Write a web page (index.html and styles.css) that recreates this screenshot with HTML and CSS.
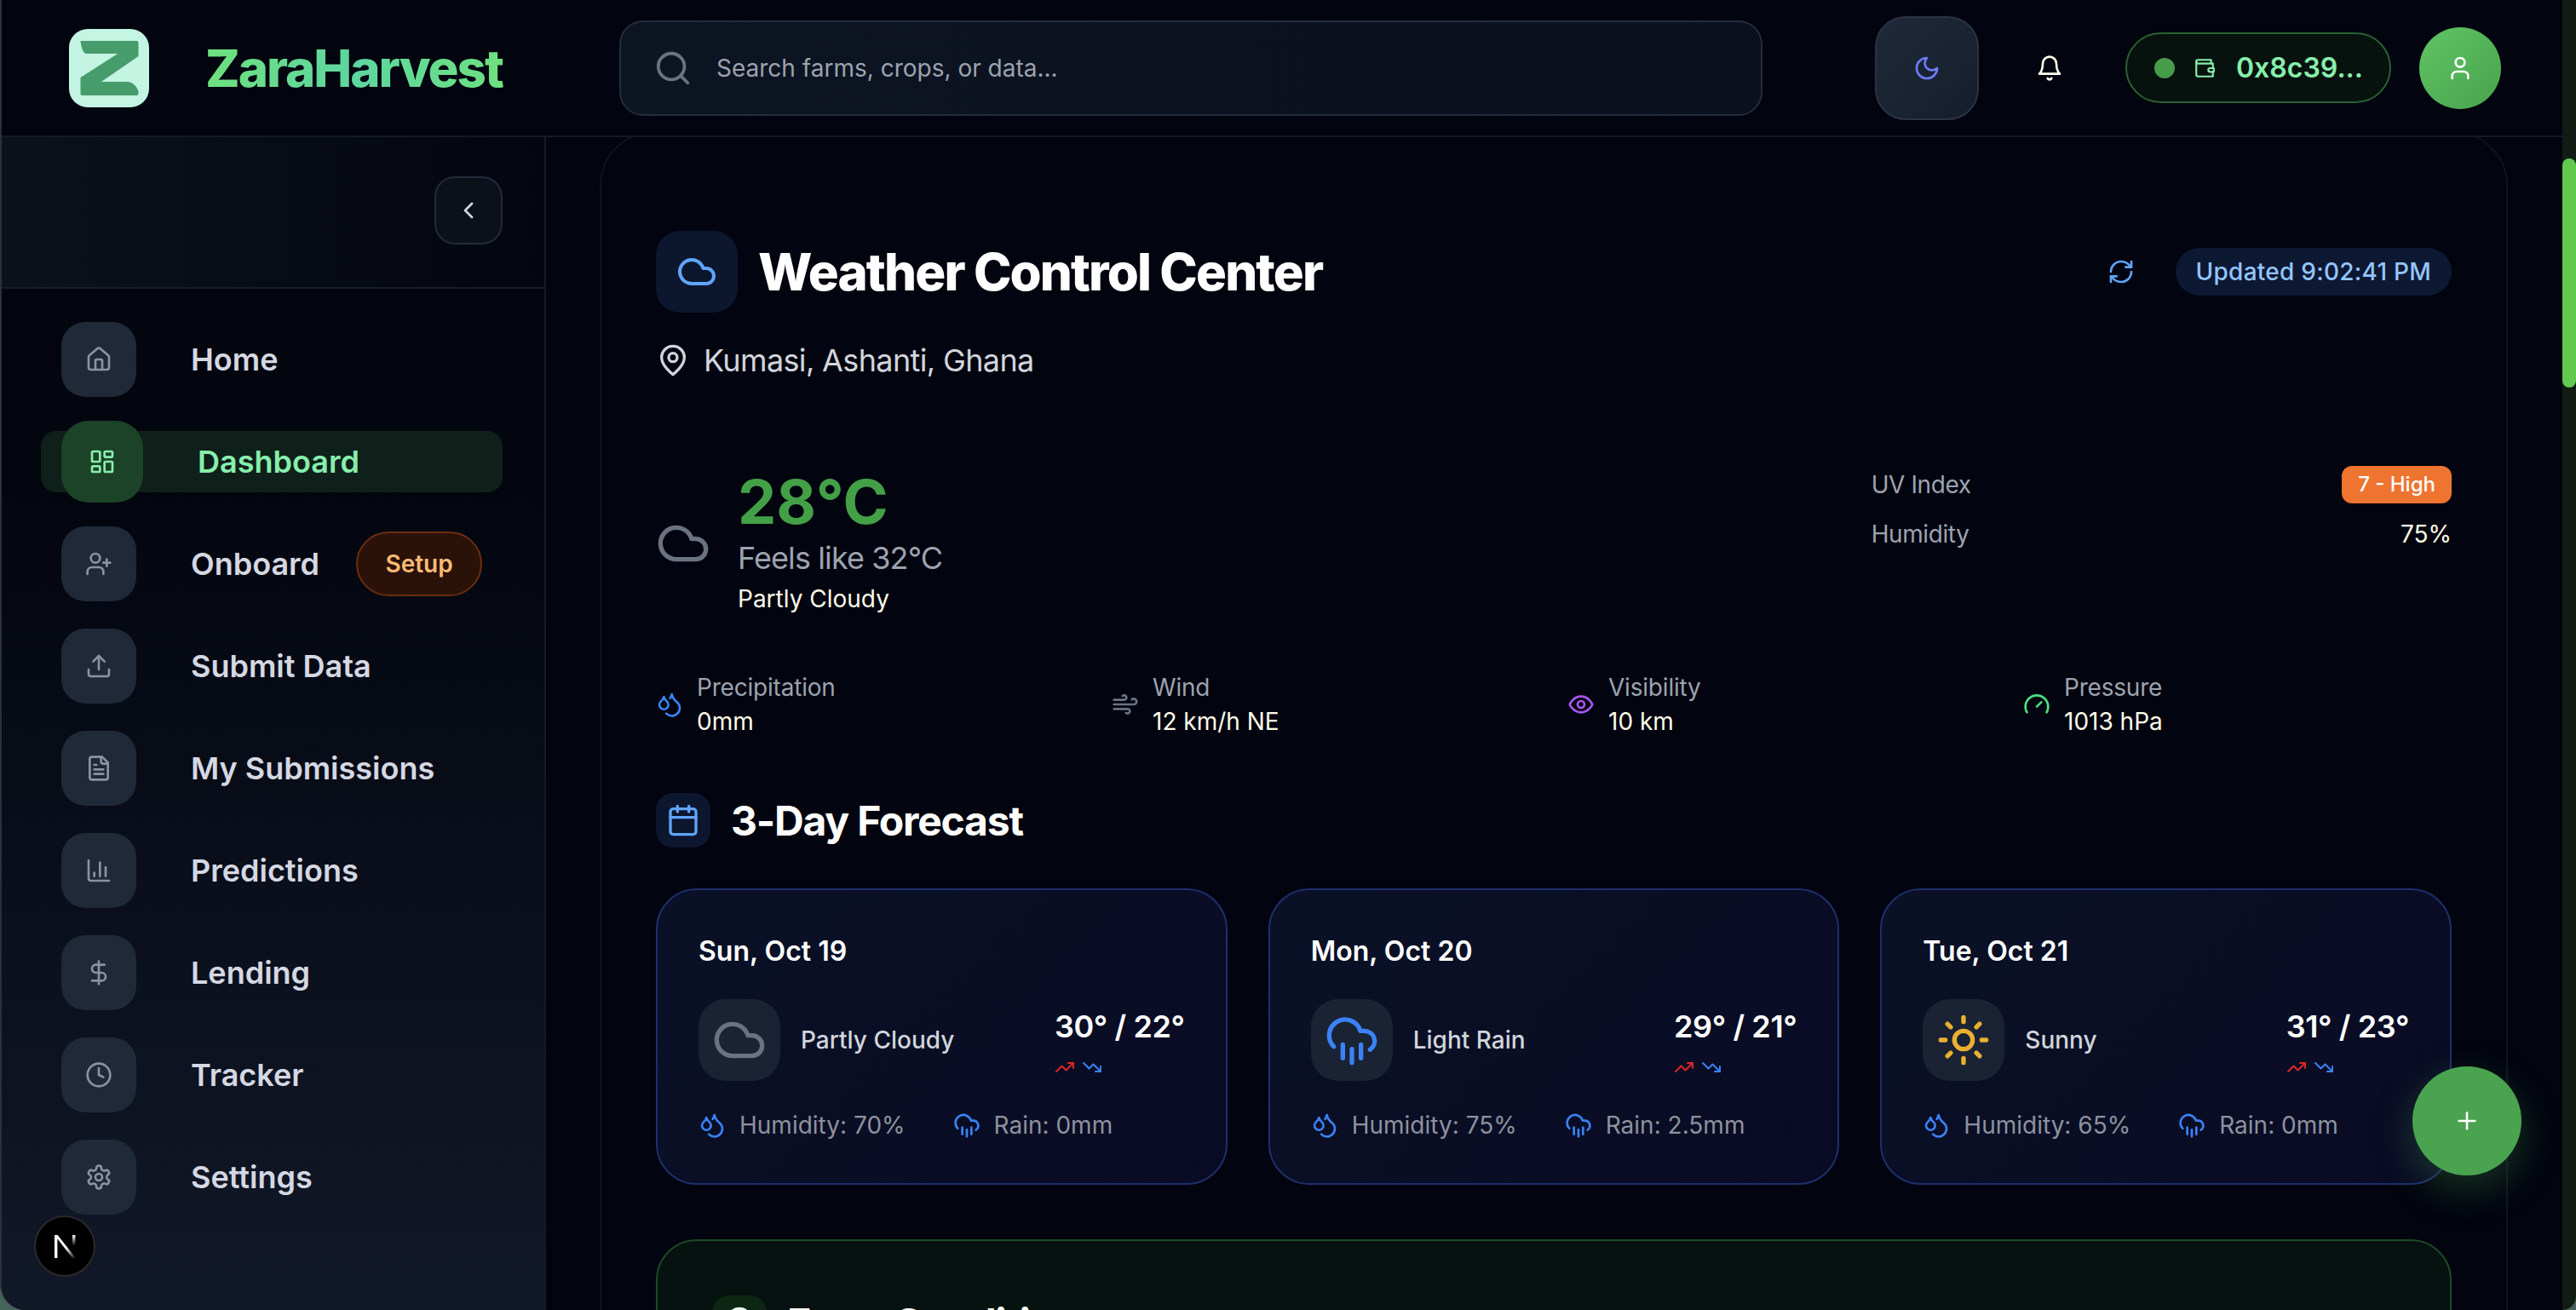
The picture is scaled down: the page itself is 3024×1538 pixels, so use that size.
FILE: index.html
```html
<!DOCTYPE html>
<html lang="en">
<head>
    <meta charset="UTF-8">
    <meta name="viewport" content="width=device-width, initial-scale=1.0">
    <title>ZaraHarvest</title>
    <link rel="stylesheet" href="styles.css">
</head>
<body>
    <svg class="sprite" xmlns="http://www.w3.org/2000/svg">
        <symbol id="i-cloud" viewBox="0 0 24 24"><path d="M17.5 19H9a7 7 0 1 1 6.71-9h1.79a4.5 4.5 0 1 1 0 9Z"/></symbol>
        <symbol id="i-rain" viewBox="0 0 24 24"><path d="M4 14.899A7 7 0 1 1 15.71 8h1.79a4.5 4.5 0 0 1 2.5 8.242"/><path d="M16 14v6"/><path d="M8 14v6"/><path d="M12 16v6"/></symbol>
        <symbol id="i-sun" viewBox="0 0 24 24"><circle cx="12" cy="12" r="4"/><path d="M12 2v2"/><path d="M12 20v2"/><path d="m4.93 4.93 1.41 1.41"/><path d="m17.66 17.66 1.41 1.41"/><path d="M2 12h2"/><path d="M20 12h2"/><path d="m6.34 17.66-1.41 1.41"/><path d="m19.07 4.93-1.41 1.41"/></symbol>
        <symbol id="i-drops" viewBox="0 0 24 24"><path d="M7 16.3c2.2 0 4-1.83 4-4.05 0-1.16-.57-2.26-1.71-3.19S7.29 6.75 7 5.3c-.29 1.45-1.14 2.84-2.29 3.76S3 11.1 3 12.25c0 2.22 1.8 4.05 4 4.05z"/><path d="M12.56 6.6A10.97 10.97 0 0 0 14 3.02c.5 2.5 2 4.9 4 6.5s3 3.5 3 5.5a6.98 6.98 0 0 1-11.91 4.97"/></symbol>
        <symbol id="i-up" viewBox="0 0 24 24"><polyline points="22 7 13.5 15.5 8.5 10.5 2 17"/><polyline points="16 7 22 7 22 13"/></symbol>
        <symbol id="i-down" viewBox="0 0 24 24"><polyline points="22 17 13.5 8.5 8.5 13.5 2 7"/><polyline points="16 17 22 17 22 11"/></symbol>
    </svg>

    <div class="window">
        <header class="topbar">
            <div class="logo">
                <svg viewBox="0 0 93 92"><path d="M13 14H79a2 2 0 0 1 2 2V32L37.5 62H68C74 62 78 66 81 73V76a2 2 0 0 1-2 2H15a2 2 0 0 1-2-2V57L56.7 29H20C16 29 14 22 13 14Z"/></svg>
            </div>
            <div class="brand">ZaraHarvest</div>
            <div class="search">
                <svg class="ic search-ic" viewBox="0 0 24 24"><circle cx="11" cy="11" r="8"/><path d="m21 21-4.3-4.3"/></svg>
                <input type="text" placeholder="Search farms, crops, or data...">
            </div>
            <button class="theme-btn">
                <svg class="ic" viewBox="0 0 24 24"><path d="M12 3a6 6 0 0 0 9 9 9 9 0 1 1-9-9Z"/></svg>
            </button>
            <button class="bell-btn">
                <svg class="ic" viewBox="0 0 24 24"><path d="M6 8a6 6 0 0 1 12 0c0 7 3 9 3 9H3s3-2 3-9"/><path d="M10.3 21a1.94 1.94 0 0 0 3.4 0"/></svg>
            </button>
            <div class="wallet">
                <span class="wallet-dot"></span>
                <svg class="ic" viewBox="0 0 24 24"><path d="M21 12V7H5a2 2 0 0 1 0-4h14v4"/><path d="M3 5v14a2 2 0 0 0 2 2h16v-5"/><path d="M18 12a2 2 0 0 0 0 4h4v-4Z"/></svg>
                <span>0x8c39...</span>
            </div>
            <button class="avatar">
                <svg class="ic" viewBox="0 0 24 24"><path d="M19 21v-2a4 4 0 0 0-4-4H9a4 4 0 0 0-4 4v2"/><circle cx="12" cy="7" r="4"/></svg>
            </button>
        </header>

        <div class="body-row">
            <aside class="sidebar">
                <div class="sidebar-head">
                    <button class="collapse-btn">
                        <svg class="ic" viewBox="0 0 24 24"><path d="m15 18-6-6 6-6"/></svg>
                    </button>
                </div>
                <nav class="nav">
                    <a class="nav-item">
                        <span class="nav-icon"><svg class="ic" viewBox="0 0 24 24"><path d="M15 21v-8a1 1 0 0 0-1-1h-4a1 1 0 0 0-1 1v8"/><path d="M3 10a2 2 0 0 1 .709-1.528l7-5.999a2 2 0 0 1 2.582 0l7 5.999A2 2 0 0 1 21 10v9a2 2 0 0 1-2 2H5a2 2 0 0 1-2-2z"/></svg></span>
                        Home
                    </a>
                    <a class="nav-item active">
                        <span class="nav-icon"><svg class="ic" viewBox="0 0 24 24"><rect x="3" y="3" width="7" height="9" rx="1"/><rect x="14" y="3" width="7" height="5" rx="1"/><rect x="14" y="12" width="7" height="9" rx="1"/><rect x="3" y="16" width="7" height="5" rx="1"/></svg></span>
                        Dashboard
                    </a>
                    <a class="nav-item">
                        <span class="nav-icon"><svg class="ic" viewBox="0 0 24 24"><path d="M16 21v-2a4 4 0 0 0-4-4H6a4 4 0 0 0-4 4v2"/><circle cx="9" cy="7" r="4"/><path d="M19 8v6"/><path d="M22 11h-6"/></svg></span>
                        Onboard
                        <span class="setup">Setup</span>
                    </a>
                    <a class="nav-item">
                        <span class="nav-icon"><svg class="ic" viewBox="0 0 24 24"><path d="M21 15v4a2 2 0 0 1-2 2H5a2 2 0 0 1-2-2v-4"/><polyline points="17 8 12 3 7 8"/><path d="M12 3v12"/></svg></span>
                        Submit Data
                    </a>
                    <a class="nav-item">
                        <span class="nav-icon"><svg class="ic" viewBox="0 0 24 24"><path d="M15 2H6a2 2 0 0 0-2 2v16a2 2 0 0 0 2 2h12a2 2 0 0 0 2-2V7Z"/><path d="M14 2v4a2 2 0 0 0 2 2h4"/><path d="M10 9H8"/><path d="M16 13H8"/><path d="M16 17H8"/></svg></span>
                        My Submissions
                    </a>
                    <a class="nav-item">
                        <span class="nav-icon"><svg class="ic" viewBox="0 0 24 24"><path d="M3 3v16a2 2 0 0 0 2 2h16"/><path d="M18 17V9"/><path d="M13 17V5"/><path d="M8 17v-3"/></svg></span>
                        Predictions
                    </a>
                    <a class="nav-item">
                        <span class="nav-icon"><svg class="ic" viewBox="0 0 24 24"><path d="M12 2v20"/><path d="M17 5H9.5a3.5 3.5 0 0 0 0 7h5a3.5 3.5 0 0 1 0 7H6"/></svg></span>
                        Lending
                    </a>
                    <a class="nav-item">
                        <span class="nav-icon"><svg class="ic" viewBox="0 0 24 24"><circle cx="12" cy="12" r="10"/><polyline points="12 6 12 12 16 14"/></svg></span>
                        Tracker
                    </a>
                    <a class="nav-item">
                        <span class="nav-icon"><svg class="ic" viewBox="0 0 24 24"><path d="M12.22 2h-.44a2 2 0 0 0-2 2v.18a2 2 0 0 1-1 1.73l-.43.25a2 2 0 0 1-2 0l-.15-.08a2 2 0 0 0-2.73.73l-.22.38a2 2 0 0 0 .73 2.73l.15.1a2 2 0 0 1 1 1.72v.51a2 2 0 0 1-1 1.74l-.15.09a2 2 0 0 0-.73 2.73l.22.38a2 2 0 0 0 2.73.73l.15-.08a2 2 0 0 1 2 0l.43.25a2 2 0 0 1 1 1.73V20a2 2 0 0 0 2 2h.44a2 2 0 0 0 2-2v-.18a2 2 0 0 1 1-1.73l.43-.25a2 2 0 0 1 2 0l.15.08a2 2 0 0 0 2.73-.73l.22-.39a2 2 0 0 0-.73-2.73l-.15-.08a2 2 0 0 1-1-1.74v-.5a2 2 0 0 1 1-1.74l.15-.09a2 2 0 0 0 .73-2.73l-.22-.38a2 2 0 0 0-2.73-.73l-.15.08a2 2 0 0 1-2 0l-.43-.25a2 2 0 0 1-1-1.73V4a2 2 0 0 0-2-2z"/><circle cx="12" cy="12" r="3"/></svg></span>
                        Settings
                    </a>
                </nav>
            </aside>

            <main class="main">
                <section class="weather-card">
                    <div class="title-row">
                        <span class="title-icon"><svg class="ic" viewBox="0 0 24 24"><use href="#i-cloud"/></svg></span>
                        <h1>Weather Control Center</h1>
                        <svg class="ic refresh" viewBox="0 0 24 24"><path d="M3 12a9 9 0 0 1 9-9 9.75 9.75 0 0 1 6.74 2.74L21 8"/><path d="M21 3v5h-5"/><path d="M21 12a9 9 0 0 1-9 9 9.75 9.75 0 0 1-6.74-2.74L3 16"/><path d="M8 16H3v5"/></svg>
                        <span class="updated">Updated 9:02:41 PM</span>
                    </div>
                    <div class="location">
                        <svg class="ic" viewBox="0 0 24 24"><path d="M20 10c0 6-8 12-8 12s-8-6-8-12a8 8 0 0 1 16 0Z"/><circle cx="12" cy="10" r="3"/></svg>
                        Kumasi, Ashanti, Ghana
                    </div>

                    <div class="current">
                        <div class="current-main">
                            <svg class="ic current-ic" viewBox="0 0 24 24"><use href="#i-cloud"/></svg>
                            <div>
                                <div class="temp">28°C</div>
                                <div class="feels">Feels like 32°C</div>
                                <div class="cond">Partly Cloudy</div>
                            </div>
                        </div>
                        <div class="current-side">
                            <div class="side-row"><span>UV Index</span><span class="uv">7 - High</span></div>
                            <div class="side-row"><span>Humidity</span><span class="side-val">75%</span></div>
                        </div>
                    </div>

                    <div class="metrics">
                        <div class="metric">
                            <svg class="ic m-blue" viewBox="0 0 24 24"><use href="#i-drops"/></svg>
                            <div><div class="m-label">Precipitation</div><div class="m-val">0mm</div></div>
                        </div>
                        <div class="metric">
                            <svg class="ic m-gray" viewBox="0 0 24 24"><path d="M17.7 7.7a2.5 2.5 0 1 1 1.8 4.3H2"/><path d="M9.6 4.6A2 2 0 1 1 11 8H2"/><path d="M12.6 19.4A2 2 0 1 0 14 16H2"/></svg>
                            <div><div class="m-label">Wind</div><div class="m-val">12 km/h NE</div></div>
                        </div>
                        <div class="metric">
                            <svg class="ic m-purple" viewBox="0 0 24 24"><path d="M2 12s3-7 10-7 10 7 10 7-3 7-10 7-10-7-10-7Z"/><circle cx="12" cy="12" r="3"/></svg>
                            <div><div class="m-label">Visibility</div><div class="m-val">10 km</div></div>
                        </div>
                        <div class="metric">
                            <svg class="ic m-green" viewBox="0 0 24 24"><path d="m12 14 4-4"/><path d="M3.34 19a10 10 0 1 1 17.32 0"/></svg>
                            <div><div class="m-label">Pressure</div><div class="m-val">1013 hPa</div></div>
                        </div>
                    </div>

                    <div class="section-head">
                        <span class="section-icon"><svg class="ic" viewBox="0 0 24 24"><path d="M8 2v4"/><path d="M16 2v4"/><rect x="3" y="4" width="18" height="18" rx="2"/><path d="M3 10h18"/></svg></span>
                        <h2>3-Day Forecast</h2>
                    </div>

                    <div class="forecast">
                        <div class="day">
                            <div class="day-date">Sun, Oct 19</div>
                            <div class="day-mid">
                                <span class="day-icon"><svg class="ic gray" viewBox="0 0 24 24"><use href="#i-cloud"/></svg></span>
                                <span class="day-cond">Partly Cloudy</span>
                                <div class="day-temps">
                                    <div class="day-temp">30° / 22°</div>
                                    <div class="trends">
                                        <svg class="ic t-up" viewBox="0 0 24 24"><use href="#i-up"/></svg>
                                        <svg class="ic t-down" viewBox="0 0 24 24"><use href="#i-down"/></svg>
                                    </div>
                                </div>
                            </div>
                            <div class="day-foot">
                                <span class="foot-item"><svg class="ic" viewBox="0 0 24 24"><use href="#i-drops"/></svg>Humidity: 70%</span>
                                <span class="foot-item"><svg class="ic" viewBox="0 0 24 24"><use href="#i-rain"/></svg>Rain: 0mm</span>
                            </div>
                        </div>
                        <div class="day">
                            <div class="day-date">Mon, Oct 20</div>
                            <div class="day-mid">
                                <span class="day-icon"><svg class="ic blue" viewBox="0 0 24 24"><use href="#i-rain"/></svg></span>
                                <span class="day-cond">Light Rain</span>
                                <div class="day-temps">
                                    <div class="day-temp">29° / 21°</div>
                                    <div class="trends">
                                        <svg class="ic t-up" viewBox="0 0 24 24"><use href="#i-up"/></svg>
                                        <svg class="ic t-down" viewBox="0 0 24 24"><use href="#i-down"/></svg>
                                    </div>
                                </div>
                            </div>
                            <div class="day-foot">
                                <span class="foot-item"><svg class="ic" viewBox="0 0 24 24"><use href="#i-drops"/></svg>Humidity: 75%</span>
                                <span class="foot-item"><svg class="ic" viewBox="0 0 24 24"><use href="#i-rain"/></svg>Rain: 2.5mm</span>
                            </div>
                        </div>
                        <div class="day">
                            <div class="day-date">Tue, Oct 21</div>
                            <div class="day-mid">
                                <span class="day-icon"><svg class="ic yellow" viewBox="0 0 24 24"><use href="#i-sun"/></svg></span>
                                <span class="day-cond">Sunny</span>
                                <div class="day-temps">
                                    <div class="day-temp">31° / 23°</div>
                                    <div class="trends">
                                        <svg class="ic t-up" viewBox="0 0 24 24"><use href="#i-up"/></svg>
                                        <svg class="ic t-down" viewBox="0 0 24 24"><use href="#i-down"/></svg>
                                    </div>
                                </div>
                            </div>
                            <div class="day-foot">
                                <span class="foot-item"><svg class="ic" viewBox="0 0 24 24"><use href="#i-drops"/></svg>Humidity: 65%</span>
                                <span class="foot-item"><svg class="ic" viewBox="0 0 24 24"><use href="#i-rain"/></svg>Rain: 0mm</span>
                            </div>
                        </div>
                    </div>

                    <div class="farm-card">
                        <div class="section-head">
                            <span class="section-icon green"><svg class="ic" viewBox="0 0 24 24"><path d="M20 10c0 6-8 12-8 12s-8-6-8-12a8 8 0 0 1 16 0Z"/><circle cx="12" cy="10" r="3"/></svg></span>
                            <h2>Farm Conditions</h2>
                        </div>
                    </div>
                </section>
            </main>
        </div>
    </div>

    <div class="scroll-track"><div class="scroll-thumb"></div></div>

    <button class="fab">
        <svg class="ic" viewBox="0 0 24 24"><path d="M5 12h14"/><path d="M12 5v14"/></svg>
    </button>

    <div class="next-badge">
        <svg viewBox="0 0 25 27">
            <defs>
                <linearGradient id="n-diag" x1="0" y1="0" x2="1" y2="1"><stop offset="0.55" stop-color="#fff"/><stop offset="1" stop-color="#fff" stop-opacity="0"/></linearGradient>
                <linearGradient id="n-stem" x1="0" y1="0" x2="0" y2="1"><stop offset="0" stop-color="#fff"/><stop offset="0.7" stop-color="#fff" stop-opacity="0"/></linearGradient>
            </defs>
            <rect x="0" y="0" width="3.4" height="27" fill="#fff"/>
            <polygon points="0,0 3.6,0 25,27 21,27" fill="url(#n-diag)"/>
            <rect x="21" y="0" width="3.4" height="18" fill="url(#n-stem)"/>
        </svg>
    </div>
</body>
</html>
```

FILE: styles.css
```css
* {
    box-sizing: border-box;
}
html, body {
    height: 100%;
}
body {
    margin: 0;
    display: flex;
    overflow: hidden;
    background-color: #45655a;
    font-family: Inter, "Liberation Sans", sans-serif;
    color: #fff;
}
h1, h2 {
    margin: 0;
    color: #fff;
}
button {
    border: none;
    padding: 0;
    background: none;
    display: flex;
    align-items: center;
    justify-content: center;
}
.sprite {
    display: none;
}
.ic {
    width: 32px;
    height: 32px;
    flex-shrink: 0;
    fill: none;
    stroke: currentColor;
    stroke-width: 2;
    stroke-linecap: round;
    stroke-linejoin: round;
}

.window {
    flex: 1;
    min-width: 0;
    height: 100%;
    display: flex;
    flex-direction: column;
    background-color: #02040f;
    border-left: 2px solid #2b303b;
    border-bottom-left-radius: 30px;
    overflow: hidden;
}

/* top bar */
.topbar {
    position: relative;
    z-index: 2;
    height: 161px;
    flex-shrink: 0;
    display: flex;
    align-items: center;
    padding: 0 72px 0 79px;
    background-color: #02040f;
    border-bottom: 2px solid #141a26;
}
.logo {
    width: 94px;
    height: 92px;
    flex-shrink: 0;
    border-radius: 22px;
    background-color: #c4f5e3;
}
.logo svg {
    display: block;
    width: 100%;
    height: 100%;
    fill: #479c6c;
}
.brand {
    width: 350px;
    flex-shrink: 0;
    margin: 0 136px 0 66px;
    white-space: nowrap;
    font-size: 60px;
    font-weight: 800;
    letter-spacing: -2px;
    background: linear-gradient(90deg, #6ee07f 0%, #5dd6a0 50%, #6ee07f 100%);
    -webkit-background-clip: text;
    background-clip: text;
    color: transparent;
}
.search {
    flex: 1;
    height: 112px;
    display: flex;
    align-items: center;
    gap: 26px;
    padding-left: 38px;
    background: linear-gradient(90deg, #0d1422, #0a101c);
    border: 2px solid #232c3c;
    border-radius: 28px;
}
.search-ic {
    width: 46px;
    height: 46px;
    color: #6b7280;
}
.search input {
    flex: 1;
    border: none;
    outline: none;
    background: none;
    font-family: inherit;
    font-size: 28px;
    color: #fff;
}
.search input::placeholder {
    color: #9ca3af;
    opacity: 1;
}
.theme-btn {
    width: 122px;
    height: 122px;
    flex-shrink: 0;
    margin-left: 132px;
    border: 2px solid #2a3343;
    border-radius: 36px;
    background: linear-gradient(135deg, #1f2937, #161e2e);
    color: #6d7cf5;
}
.bell-btn {
    width: 102px;
    height: 96px;
    flex-shrink: 0;
    margin: 0 38px 0 32px;
    color: #fefce8;
}
.wallet {
    width: 312px;
    height: 83px;
    flex-shrink: 0;
    display: flex;
    align-items: center;
    padding-left: 32px;
    margin-right: 33px;
    background-color: #07120e;
    border: 2px solid #2a6232;
    border-radius: 42px;
    font-size: 32px;
    font-weight: 600;
    color: #86efac;
}
.wallet-dot {
    width: 24px;
    height: 24px;
    border-radius: 50%;
    background-color: #479c4b;
    margin-right: 22px;
}
.wallet .ic {
    width: 26px;
    height: 26px;
    margin-right: 24px;
}
.avatar {
    width: 96px;
    height: 96px;
    flex-shrink: 0;
    border-radius: 50%;
    background: linear-gradient(135deg, #5fc463, #48a34d);
    color: #fff;
}

/* sidebar */
.body-row {
    flex: 1;
    min-height: 0;
    display: flex;
}
.sidebar {
    width: 639px;
    flex-shrink: 0;
    background: linear-gradient(180deg, #03060f 30%, #111827 100%);
    border-right: 2px solid #141a26;
}
.sidebar-head {
    height: 178px;
    display: flex;
    align-items: center;
    justify-content: flex-end;
    padding: 0 49px 4px 0;
    background: linear-gradient(90deg, #0c111b, #03060f);
    border-bottom: 2px solid #161c29;
}
.collapse-btn {
    width: 80px;
    height: 80px;
    border: 2px solid #232b3a;
    border-radius: 24px;
    background-color: #0b101a;
    color: #d1d5db;
}
.nav {
    display: flex;
    flex-direction: column;
    gap: 32px;
    padding: 39px 49px 0 70px;
}
.nav-item {
    height: 88px;
    display: flex;
    align-items: center;
    gap: 64px;
    font-size: 36px;
    font-weight: 600;
    color: #d5d8e2;
}
.nav-icon {
    width: 88px;
    height: 88px;
    flex-shrink: 0;
    display: flex;
    align-items: center;
    justify-content: center;
    border-radius: 28px;
    background-color: #1f2937;
    color: #8b92a3;
}
.nav-item.active {
    height: 72px;
    margin: 8px 0 8px -24px;
    padding-left: 24px;
    border-radius: 18px;
    background-color: #0f1f1a;
    color: #86efac;
}
.nav-item.active .nav-icon {
    width: 96px;
    height: 96px;
    border-radius: 32px;
    background-color: #1c4227;
    color: #86efac;
}
.setup {
    width: 148px;
    height: 76px;
    margin-left: -21px;
    display: flex;
    align-items: center;
    justify-content: center;
    border: 2px solid #6b2e10;
    border-radius: 38px;
    background-color: #2a1209;
    font-size: 28px;
    color: #fdba74;
}

/* main column */
.main {
    flex: 1;
    min-width: 0;
    padding: 0 64px 0 63px;
    overflow: hidden;
}
.weather-card {
    margin-top: -7px;
    padding: 115px 64px 0;
    background-color: #02040f;
    border: 2px solid #10141e;
    border-radius: 64px;
}
.title-row {
    display: flex;
    align-items: center;
    height: 96px;
}
.title-icon {
    width: 96px;
    height: 96px;
    flex-shrink: 0;
    display: flex;
    align-items: center;
    justify-content: center;
    border-radius: 28px;
    background-color: #0c162e;
    color: #60a5fa;
}
.title-icon .ic {
    width: 48px;
    height: 48px;
}
h1 {
    flex: 1;
    margin-left: 24px;
    font-size: 60px;
    font-weight: 800;
    letter-spacing: -1.9px;
}
.refresh {
    color: #60a5fa;
    margin-right: 48px;
}
.updated {
    height: 56px;
    display: flex;
    align-items: center;
    padding: 0 24px;
    border-radius: 28px;
    background-color: #0d1833;
    font-size: 28px;
    font-weight: 500;
    letter-spacing: 0.25px;
    color: #93c5fd;
}
.location {
    display: flex;
    align-items: center;
    gap: 16px;
    margin-top: 28px;
    font-size: 36px;
    line-height: 56px;
    letter-spacing: -0.64px;
    color: #d1d5db;
}
.location .ic {
    width: 40px;
    height: 40px;
}

.current {
    display: grid;
    grid-template-columns: repeat(3, 1fr);
    gap: 32px;
    margin-top: 96px;
}
.current-main {
    grid-column: span 2;
    display: flex;
    align-items: center;
    gap: 32px;
    padding-top: 6px;
}
.current-ic {
    width: 64px;
    height: 64px;
    color: #6b7280;
}
.temp {
    font-size: 72px;
    line-height: 72px;
    font-weight: 700;
    color: #43a047;
}
.feels {
    margin-top: 2px;
    font-size: 36px;
    line-height: 56px;
    letter-spacing: -0.9px;
    color: #9ca3af;
}
.cond {
    font-size: 28px;
    line-height: 40px;
    color: #fefce8;
}
.current-side {
    display: flex;
    flex-direction: column;
    gap: 16px;
    font-size: 28px;
    letter-spacing: -0.4px;
    color: #9ca3af;
}
.side-row {
    display: flex;
    align-items: center;
    justify-content: space-between;
    line-height: 40px;
}
.uv {
    height: 44px;
    display: flex;
    align-items: center;
    padding: 0 19px;
    border-radius: 12px;
    background-color: #ee7430;
    font-size: 24px;
    font-weight: 500;
    letter-spacing: 0;
    color: #fff;
}
.side-val {
    letter-spacing: 0;
    color: #fefce8;
}

.metrics {
    display: grid;
    grid-template-columns: repeat(4, 1fr);
    gap: 32px;
    margin-top: 64px;
}
.metric {
    display: flex;
    align-items: center;
    gap: 16px;
}
.m-label {
    font-size: 28px;
    line-height: 40px;
    letter-spacing: -0.2px;
    color: #9ca3af;
}
.m-val {
    font-size: 28px;
    line-height: 40px;
    color: #fefce8;
}
.m-blue { color: #3b82f6; }
.m-gray { color: #6b7280; }
.m-purple { color: #a855f7; }
.m-green { color: #4ade80; }

.section-head {
    display: flex;
    align-items: center;
    gap: 24px;
}
.weather-card > .section-head {
    margin-top: 64px;
}
.section-icon {
    width: 64px;
    height: 64px;
    flex-shrink: 0;
    display: flex;
    align-items: center;
    justify-content: center;
    border-radius: 20px;
    background-color: #0c162e;
    color: #60a5fa;
}
.section-icon .ic {
    width: 40px;
    height: 40px;
}
.section-icon.green {
    background-color: #0d2614;
    color: #f0fdf4;
}
h2 {
    font-size: 48px;
    font-weight: 700;
    letter-spacing: -1.2px;
}

.forecast {
    display: grid;
    grid-template-columns: repeat(3, 1fr);
    gap: 48px;
    margin-top: 48px;
}
.day {
    padding: 48px;
    border: 2px solid #1e2f6d;
    border-radius: 48px;
    background: linear-gradient(135deg, #0a1126, #090b24);
}
.day-date {
    font-size: 32px;
    line-height: 48px;
    font-weight: 600;
    color: #fff;
}
.day-mid {
    display: flex;
    align-items: center;
    margin-top: 32px;
}
.day-icon {
    width: 96px;
    height: 96px;
    flex-shrink: 0;
    display: flex;
    align-items: center;
    justify-content: center;
    border-radius: 32px;
    background-color: #1a2333;
}
.day-icon .ic {
    width: 64px;
    height: 64px;
}
.gray { color: #6b7280; }
.blue { color: #3b82f6; }
.yellow { color: #eab032; }
.day-cond {
    flex: 1;
    margin-left: 24px;
    font-size: 28px;
    font-weight: 500;
    color: #d1d5db;
}
.day-temp {
    font-size: 36px;
    line-height: 56px;
    font-weight: 600;
    letter-spacing: -0.4px;
    color: #fff;
}
.trends {
    display: flex;
    gap: 8px;
    margin-top: 8px;
}
.trends .ic {
    width: 24px;
    height: 24px;
}
.t-up { color: #dc2626; }
.t-down { color: #3b82f6; }
.day-foot {
    display: flex;
    gap: 56px;
    margin-top: 32px;
}
.foot-item {
    display: flex;
    align-items: center;
    gap: 16px;
    font-size: 28px;
    line-height: 40px;
    color: #8e929e;
}
.foot-item .ic {
    color: #3b82f6;
}

.farm-card {
    margin-top: 64px;
    padding: 64px;
    border: 2px solid #1d4a27;
    border-radius: 48px;
    background-color: #06120f;
}

/* things that float over the page */
.scroll-track {
    width: 16px;
    height: 100%;
    flex-shrink: 0;
    background-color: #111c14;
    border-bottom-right-radius: 30px;
}
.scroll-thumb {
    height: 269px;
    margin-top: 186px;
    border-radius: 8px;
    background-color: #63c94e;
}
.fab {
    position: fixed;
    right: 64px;
    bottom: 158px;
    width: 128px;
    height: 128px;
    border-radius: 50%;
    background-color: #4aa34e;
    box-shadow: 0 16px 48px rgba(74, 163, 78, 0.3);
    color: #fff;
}
.next-badge {
    position: fixed;
    left: 40px;
    bottom: 39px;
    width: 72px;
    height: 72px;
    display: flex;
    align-items: center;
    justify-content: center;
    border: 2px solid #2a2a2a;
    border-radius: 50%;
    background-color: #000;
}
.next-badge svg {
    width: 25px;
    height: 27px;
}
```
